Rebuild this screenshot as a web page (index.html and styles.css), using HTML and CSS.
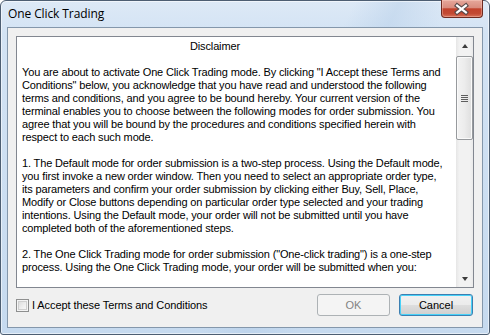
FILE: index.html
```html
<!DOCTYPE html>
<html>
<head>
<meta charset="utf-8">
<link rel="stylesheet" href="styles.css">
</head>
<body>
<div class="window">
  <div class="titlebar">
    <span class="title">One Click Trading</span>
    <div class="close">
      <svg width="42" height="18" viewBox="0 0 42 18">
        <path d="M16.5 5.5 L25.5 12.5 M25.5 5.5 L16.5 12.5" stroke="#5a4a4a" stroke-width="4.5" stroke-linecap="square" fill="none"/>
        <path d="M16.5 5.5 L25.5 12.5 M25.5 5.5 L16.5 12.5" stroke="#ffffff" stroke-width="2.2" stroke-linecap="square" fill="none"/>
      </svg>
    </div>
  </div>
  <div class="client">
    <div class="box">
      <div class="text">
        <p class="heading">Disclaimer</p>
        <p>You are about to activate One Click Trading mode. By clicking "I Accept these Terms and<br>Conditions" below, you acknowledge that you have read and understood the following<br>terms and conditions, and you agree to be bound hereby. Your current version of the<br>terminal enables you to choose between the following modes for order submission. You<br>agree that you will be bound by the procedures and conditions specified herein with<br>respect to each such mode.</p>
        <p>1. The Default mode for order submission is a two-step process. Using the Default mode,<br>you first invoke a new order window. Then you need to select an appropriate order type,<br>its parameters and confirm your order submission by clicking either Buy, Sell, Place,<br>Modify or Close buttons depending on particular order type selected and your trading<br>intentions. Using the Default mode, your order will not be submitted until you have<br>completed both of the aforementioned steps.</p>
        <p>2. The One Click Trading mode for order submission ("One-click trading") is a one-step<br>process. Using the One Click Trading mode, your order will be submitted when you:</p>
      </div>
      <div class="scrollbar">
        <div class="sb-btn"><span class="tri up"></span></div>
        <div class="track">
          <div class="thumb"><span class="grip"></span></div>
        </div>
        <div class="sb-btn"><span class="tri down"></span></div>
      </div>
    </div>
    <div class="footer">
      <label class="check"><span class="cb"></span><span>I Accept these Terms and Conditions</span></label>
      <div class="buttons">
        <button class="btn ok" disabled>OK</button>
        <button class="btn cancel">Cancel</button>
      </div>
    </div>
  </div>
</div>
</body>
</html>
```
FILE: styles.css
```css
html, body {
  margin: 0;
  padding: 0;
  background: #ffffff;
}
body {
  width: 490px;
  height: 335px;
  overflow: hidden;
  font-family: "Liberation Sans", Arial, sans-serif;
}
.window {
  box-sizing: border-box;
  width: 490px;
  height: 335px;
  border: 1px solid #4d5e72;
  border-radius: 6px 6px 3px 3px;
  background:
    linear-gradient(115deg, rgba(255,255,255,0) 55%, rgba(180,205,232,0.45) 62%, rgba(255,255,255,0) 70%),
    linear-gradient(180deg, #dde9f6 0%, #d3e3f4 10%, #c6daef 100%);
  box-shadow: inset 0 0 0 1px rgba(255,255,255,0.55);
  padding: 0 6px 6px;
  display: flex;
  flex-direction: column;
}
.titlebar {
  height: 26px;
  display: flex;
  justify-content: space-between;
  align-items: flex-start;
}
.title {
  font-family: "Open Sans", "Noto Sans", sans-serif;
  font-size: 12px;
  line-height: 16px;
  letter-spacing: -0.1px;
  color: #000;
  padding: 5px 0 0 1px;
}
.close {
  width: 42px;
  height: 18px;
  box-sizing: border-box;
  margin-top: -1px;
  border: 1px solid #6e2a20;
  border-top: none;
  border-radius: 0 0 4px 4px;
  background: linear-gradient(180deg, #e6a79b 0%, #d98c7e 45%, #c2422c 52%, #c34a33 80%, #d9725a 100%);
  box-shadow: inset 0 0 0 1px rgba(255,220,210,0.35);
  display: flex;
  justify-content: center;
}
.close svg {
  display: block;
  margin-left: -1px;
}
.client {
  flex: 1;
  background: #f0f0f0;
  border: 1px solid #8497ab;
  padding: 8px 8px 0 8px;
  display: flex;
  flex-direction: column;
}
.box {
  height: 252px;
  box-sizing: border-box;
  border: 1px solid #828790;
  background: #ffffff;
  display: flex;
}
.text {
  flex: 1;
  overflow: hidden;
  padding: 3px 0 0 5px;
  font-size: 11px;
  line-height: 13px;
  letter-spacing: -0.14px;
  color: #000;
  white-space: nowrap;
}
.text p {
  margin: 0 0 13px 0;
}
.text .heading {
  padding-left: 168px;
}
.scrollbar {
  width: 17px;
  display: flex;
  flex-direction: column;
  background: linear-gradient(90deg, #e6e6e6 0%, #f2f2f2 20%, #f2f2f2 80%, #eaeaea 100%);
}
.sb-btn {
  height: 17px;
  display: flex;
  align-items: center;
  justify-content: center;
}
.tri {
  width: 0;
  height: 0;
  border-left: 3.5px solid transparent;
  border-right: 3.5px solid transparent;
}
.tri.up {
  border-bottom: 4px solid #3c3c3c;
  margin-top: 1px;
}
.tri.down {
  border-top: 4px solid #3c3c3c;
  margin-top: 1px;
}
.track {
  flex: 1;
  padding: 2px 0 0 0;
}
.thumb {
  height: 84px;
  box-sizing: border-box;
  border: 1px solid #979a9d;
  border-radius: 2px;
  background: linear-gradient(90deg, #f3f3f3 0%, #ececec 50%, #dedede 100%);
  box-shadow: inset 0 0 0 1px #fafafa;
  display: flex;
  align-items: center;
  justify-content: center;
}
.grip {
  width: 7px;
  height: 7px;
  background: repeating-linear-gradient(180deg, #5e5e5e 0px, #5e5e5e 1px, transparent 1px, transparent 2px);
}
.footer {
  margin-top: 6px;
  height: 22px;
  display: flex;
  align-items: center;
  justify-content: space-between;
  padding-right: 1px;
}
.check {
  display: flex;
  align-items: center;
  font-size: 11px;
  letter-spacing: -0.08px;
  color: #000;
}
.cb {
  width: 13px;
  height: 13px;
  box-sizing: border-box;
  border: 1px solid #8e8f8f;
  background: linear-gradient(135deg, #d6d6d6 0%, #f0f0f0 60%, #fafafa 100%);
  box-shadow: inset 0 0 0 1px #f4f4f4, inset 0 0 0 2px #cfcfcf;
  margin-right: 3px;
}
.buttons {
  display: flex;
}
.btn {
  height: 22px;
  box-sizing: border-box;
  border-radius: 3px;
  font-family: "Liberation Sans", Arial, sans-serif;
  font-size: 11px;
  padding: 0;
}
.ok {
  width: 73px;
  margin-right: 9px;
  border: 1px solid #adb2b5;
  background: #f4f4f4;
  color: #838383;
}
.cancel {
  width: 74px;
  border: 1px solid #3c7fb1;
  background: linear-gradient(180deg, #f2f2f2 0%, #ebebeb 48%, #dddddd 52%, #cfcfcf 100%);
  box-shadow: inset 0 0 0 1px #48d1f8;
  color: #000;
}
```
